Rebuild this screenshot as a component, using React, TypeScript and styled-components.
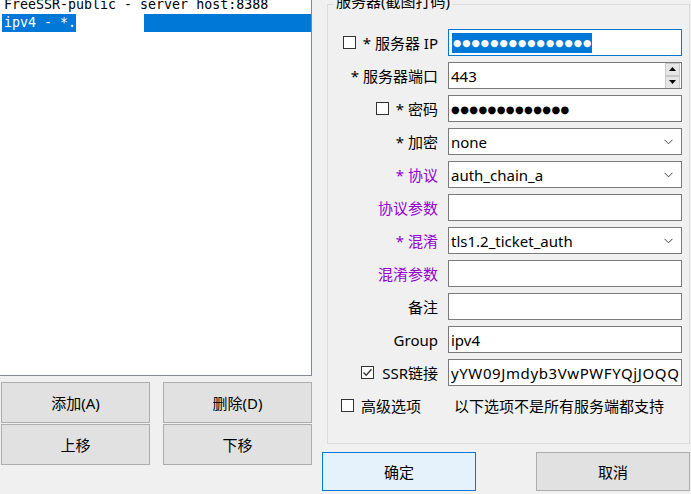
import React from "react";
import styled, { createGlobalStyle } from "styled-components";

const Global = createGlobalStyle`
  html, body { margin: 0; padding: 0; background: #f0f0f0; overflow: hidden; }
  body {
    font-family: "Noto Sans", "Noto Sans CJK SC", sans-serif;
    font-size: 15px;
    color: #000;
  }
`;

const Window = styled.div`
  width: 691px;
  height: 494px;
  display: flex;
  background: #f0f0f0;
  overflow: hidden;
`;

const LeftColumn = styled.div`
  width: 312px;
  flex: none;
  display: flex;
  flex-direction: column;
`;

const ListBox = styled.div`
  height: 376px;
  box-sizing: border-box;
  background: #fff;
  border-right: 1px solid #828790;
  border-bottom: 1px solid #828790;
  padding-left: 2px;
  overflow: hidden;
`;

const ListContent = styled.div`
  margin-top: -4px;
`;

const ListItem = styled.div<{ $selected?: boolean }>`
  height: 18px;
  line-height: 18px;
  padding-left: 2px;
  font-family: "DejaVu Sans Mono", "Liberation Mono", monospace;
  font-size: 13.3px;
  white-space: pre;
  background: ${(p) => (p.$selected ? "#0078d7" : "transparent")};
  color: ${(p) => (p.$selected ? "#fff" : "#000")};
`;

const MaskBlock = styled.span`
  display: inline-block;
  width: 68px;
  height: 18px;
  vertical-align: top;
  background: #fff;
`;

const ButtonGrid = styled.div`
  margin-top: 6px;
  padding-left: 1px;
  display: grid;
  grid-template-columns: 149px 149px;
  column-gap: 13px;
  row-gap: 1px;
`;

const PushButton = styled.button<{ $w?: number; $h?: number; $default?: boolean }>`
  box-sizing: border-box;
  width: ${(p) => (p.$w ? `${p.$w}px` : "auto")};
  height: ${(p) => p.$h ?? 41}px;
  margin: 0;
  padding: 0;
  border: 1px solid ${(p) => (p.$default ? "#0078d7" : "#adadad")};
  background: ${(p) => (p.$default ? "#e5f1fb" : "#e1e1e1")};
  font-family: "Noto Sans", "Noto Sans CJK SC", sans-serif;
  font-size: 15px;
  color: #000;
  display: flex;
  align-items: center;
  justify-content: center;
`;

const RightColumn = styled.div`
  flex: 1;
  padding-left: 15px;
  display: flex;
  flex-direction: column;
`;

const Group = styled.fieldset`
  margin: -6px 0 0 0;
  width: 363px;
  height: 450px;
  box-sizing: border-box;
  border: 1px solid #dcdcdc;
  padding: 15px 7px 0 0;
  min-width: 0;
`;

const Legend = styled.legend`
  margin-left: 6px;
  padding: 0 2px;
  font-size: 15px;
  line-height: 20px;
`;

const LegendText = styled.span`
  position: relative;
  top: -3px;
`;

const Form = styled.div`
  display: flex;
  flex-direction: column;
  gap: 6px;
`;

const FieldRow = styled.div`
  display: grid;
  grid-template-columns: 110px 234px;
  column-gap: 10px;
  height: 27px;
  align-items: center;
`;

const LabelCell = styled.div<{ $purple?: boolean; $gap?: number }>`
  display: flex;
  justify-content: flex-end;
  align-items: center;
  gap: ${(p) => p.$gap ?? 7}px;
  white-space: nowrap;
  color: ${(p) => (p.$purple ? "#9400d3" : "#000")};
`;

const CheckBox = styled.span`
  box-sizing: border-box;
  width: 13px;
  height: 13px;
  flex: none;
  border: 1px solid #333;
  background: #fff;
  display: inline-flex;
  align-items: center;
  justify-content: center;
`;

const TextBox = styled.div<{ $focused?: boolean; $padRight?: number }>`
  box-sizing: border-box;
  height: 27px;
  border: 1px solid ${(p) => (p.$focused ? "#0078d7" : "#7a7a7a")};
  background: #fff;
  display: flex;
  align-items: center;
  padding: 0 ${(p) => p.$padRight ?? 2}px 0 2px;
  overflow: hidden;
  white-space: nowrap;
`;

const Value = styled.span<{ $spacing?: number }>`
  flex: 1;
  overflow: hidden;
  white-space: nowrap;
  letter-spacing: ${(p) => p.$spacing ?? 0}px;
`;

const Selection = styled.span`
  display: inline-flex;
  align-items: center;
  height: 20px;
  margin-left: 1px;
  padding: 0 0 0 1px;
  background: #0078d7;
  color: #fff;
`;

const Dots = styled.span<{ $size: number; $spacing: number }>`
  font-family: "DejaVu Sans", sans-serif;
  font-size: ${(p) => p.$size}px;
  letter-spacing: ${(p) => p.$spacing}px;
  line-height: 20px;
`;

const Spinner = styled.div`
  display: flex;
  flex-direction: column;
  width: 15px;
`;

const SpinButton = styled.div`
  box-sizing: border-box;
  height: 13px;
  border: 1px solid #c8c8c8;
  background: #e6e6e6;
  display: flex;
  align-items: center;
  justify-content: center;
`;

const AdvancedRow = styled.div`
  display: flex;
  align-items: center;
  height: 20px;
  margin-top: 3px;
  padding-left: 13px;
  gap: 7px;
`;

const Hint = styled.span`
  margin-left: 26px;
  white-space: nowrap;
`;

const ButtonBar = styled.div`
  margin-top: 8px;
  margin-left: -5px;
  width: 368px;
  display: flex;
  justify-content: space-between;
`;

const Chevron = () => (
  <svg width="9" height="6" viewBox="0 0 9 6" style={{ flex: "none" }}>
    <path d="M0.5 0.8 L4.5 4.8 L8.5 0.8" fill="none" stroke="#444" strokeWidth="1" />
  </svg>
);

const Check = () => (
  <svg width="11" height="11" viewBox="0 0 11 11">
    <path d="M1.5 5.5 L4.2 8.2 L9.5 2.2" fill="none" stroke="#333" strokeWidth="1.3" />
  </svg>
);

const Triangle = ({ up }: { up?: boolean }) => (
  <svg width="7" height="4" viewBox="0 0 7 4">
    <path d={up ? "M0 4 L3.5 0 L7 4 Z" : "M0 0 L3.5 4 L7 0 Z"} fill="#000" />
  </svg>
);

type Field = {
  label: string;
  purple?: boolean;
  kind?: "text" | "combo";
  value?: string;
};

export default function App() {
  return (
    <Window>
      <Global />
      <LeftColumn>
        <ListBox>
          <ListContent>
            <ListItem>FreeSSR-public - server host:8388</ListItem>
            <ListItem $selected>
              ipv4 - *.<MaskBlock />
            </ListItem>
          </ListContent>
        </ListBox>
        <ButtonGrid>
          <PushButton>添加(A)</PushButton>
          <PushButton>删除(D)</PushButton>
          <PushButton>上移</PushButton>
          <PushButton>下移</PushButton>
        </ButtonGrid>
      </LeftColumn>
      <RightColumn>
        <Group>
          <Legend>
            <LegendText>服务器(截图打码)</LegendText>
          </Legend>
          <Form>
            <FieldRow>
              <LabelCell>
                <CheckBox />
                <span>* 服务器 IP</span>
              </LabelCell>
              <TextBox $focused>
                <Selection>
                  <Dots $size={9.5} $spacing={1}>●●●●●●●●●●●●●●●</Dots>
                </Selection>
              </TextBox>
            </FieldRow>
            <FieldRow>
              <LabelCell>* 服务器端口</LabelCell>
              <TextBox $padRight={1}>
                <Value>443</Value>
                <Spinner>
                  <SpinButton>
                    <Triangle up />
                  </SpinButton>
                  <SpinButton>
                    <Triangle />
                  </SpinButton>
                </Spinner>
              </TextBox>
            </FieldRow>
            <FieldRow>
              <LabelCell>
                <CheckBox />
                <span>* 密码</span>
              </LabelCell>
              <TextBox>
                <Value>
                  <Dots $size={10} $spacing={0.4}>●●●●●●●●●●●●●</Dots>
                </Value>
              </TextBox>
            </FieldRow>
            {(
              [
                { label: "* 加密", kind: "combo", value: "none" },
                { label: "* 协议", kind: "combo", value: "auth_chain_a", purple: true },
                { label: "协议参数", purple: true },
                { label: "* 混淆", kind: "combo", value: "tls1.2_ticket_auth", purple: true },
                { label: "混淆参数", purple: true },
                { label: "备注" },
                { label: "Group", value: "ipv4" },
              ] as Field[]
            ).map((f) => (
              <FieldRow key={f.label}>
                <LabelCell $purple={f.purple}>{f.label}</LabelCell>
                <TextBox $padRight={f.kind === "combo" ? 8 : 2}>
                  <Value>{f.value ?? ""}</Value>
                  {f.kind === "combo" && <Chevron />}
                </TextBox>
              </FieldRow>
            ))}
            <FieldRow>
              <LabelCell $gap={8}>
                <CheckBox>
                  <Check />
                </CheckBox>
                <span>SSR链接</span>
              </LabelCell>
              <TextBox>
                <Value $spacing={0.6}>yYW09Jmdyb3VwPWFYQjJOQQ</Value>
              </TextBox>
            </FieldRow>
            <AdvancedRow>
              <CheckBox />
              <span>高级选项</span>
              <Hint>以下选项不是所有服务端都支持</Hint>
            </AdvancedRow>
          </Form>
        </Group>
        <ButtonBar>
          <PushButton $w={154} $h={39} $default>
            确定
          </PushButton>
          <PushButton $w={154} $h={39}>
            取消
          </PushButton>
        </ButtonBar>
      </RightColumn>
    </Window>
  );
}
